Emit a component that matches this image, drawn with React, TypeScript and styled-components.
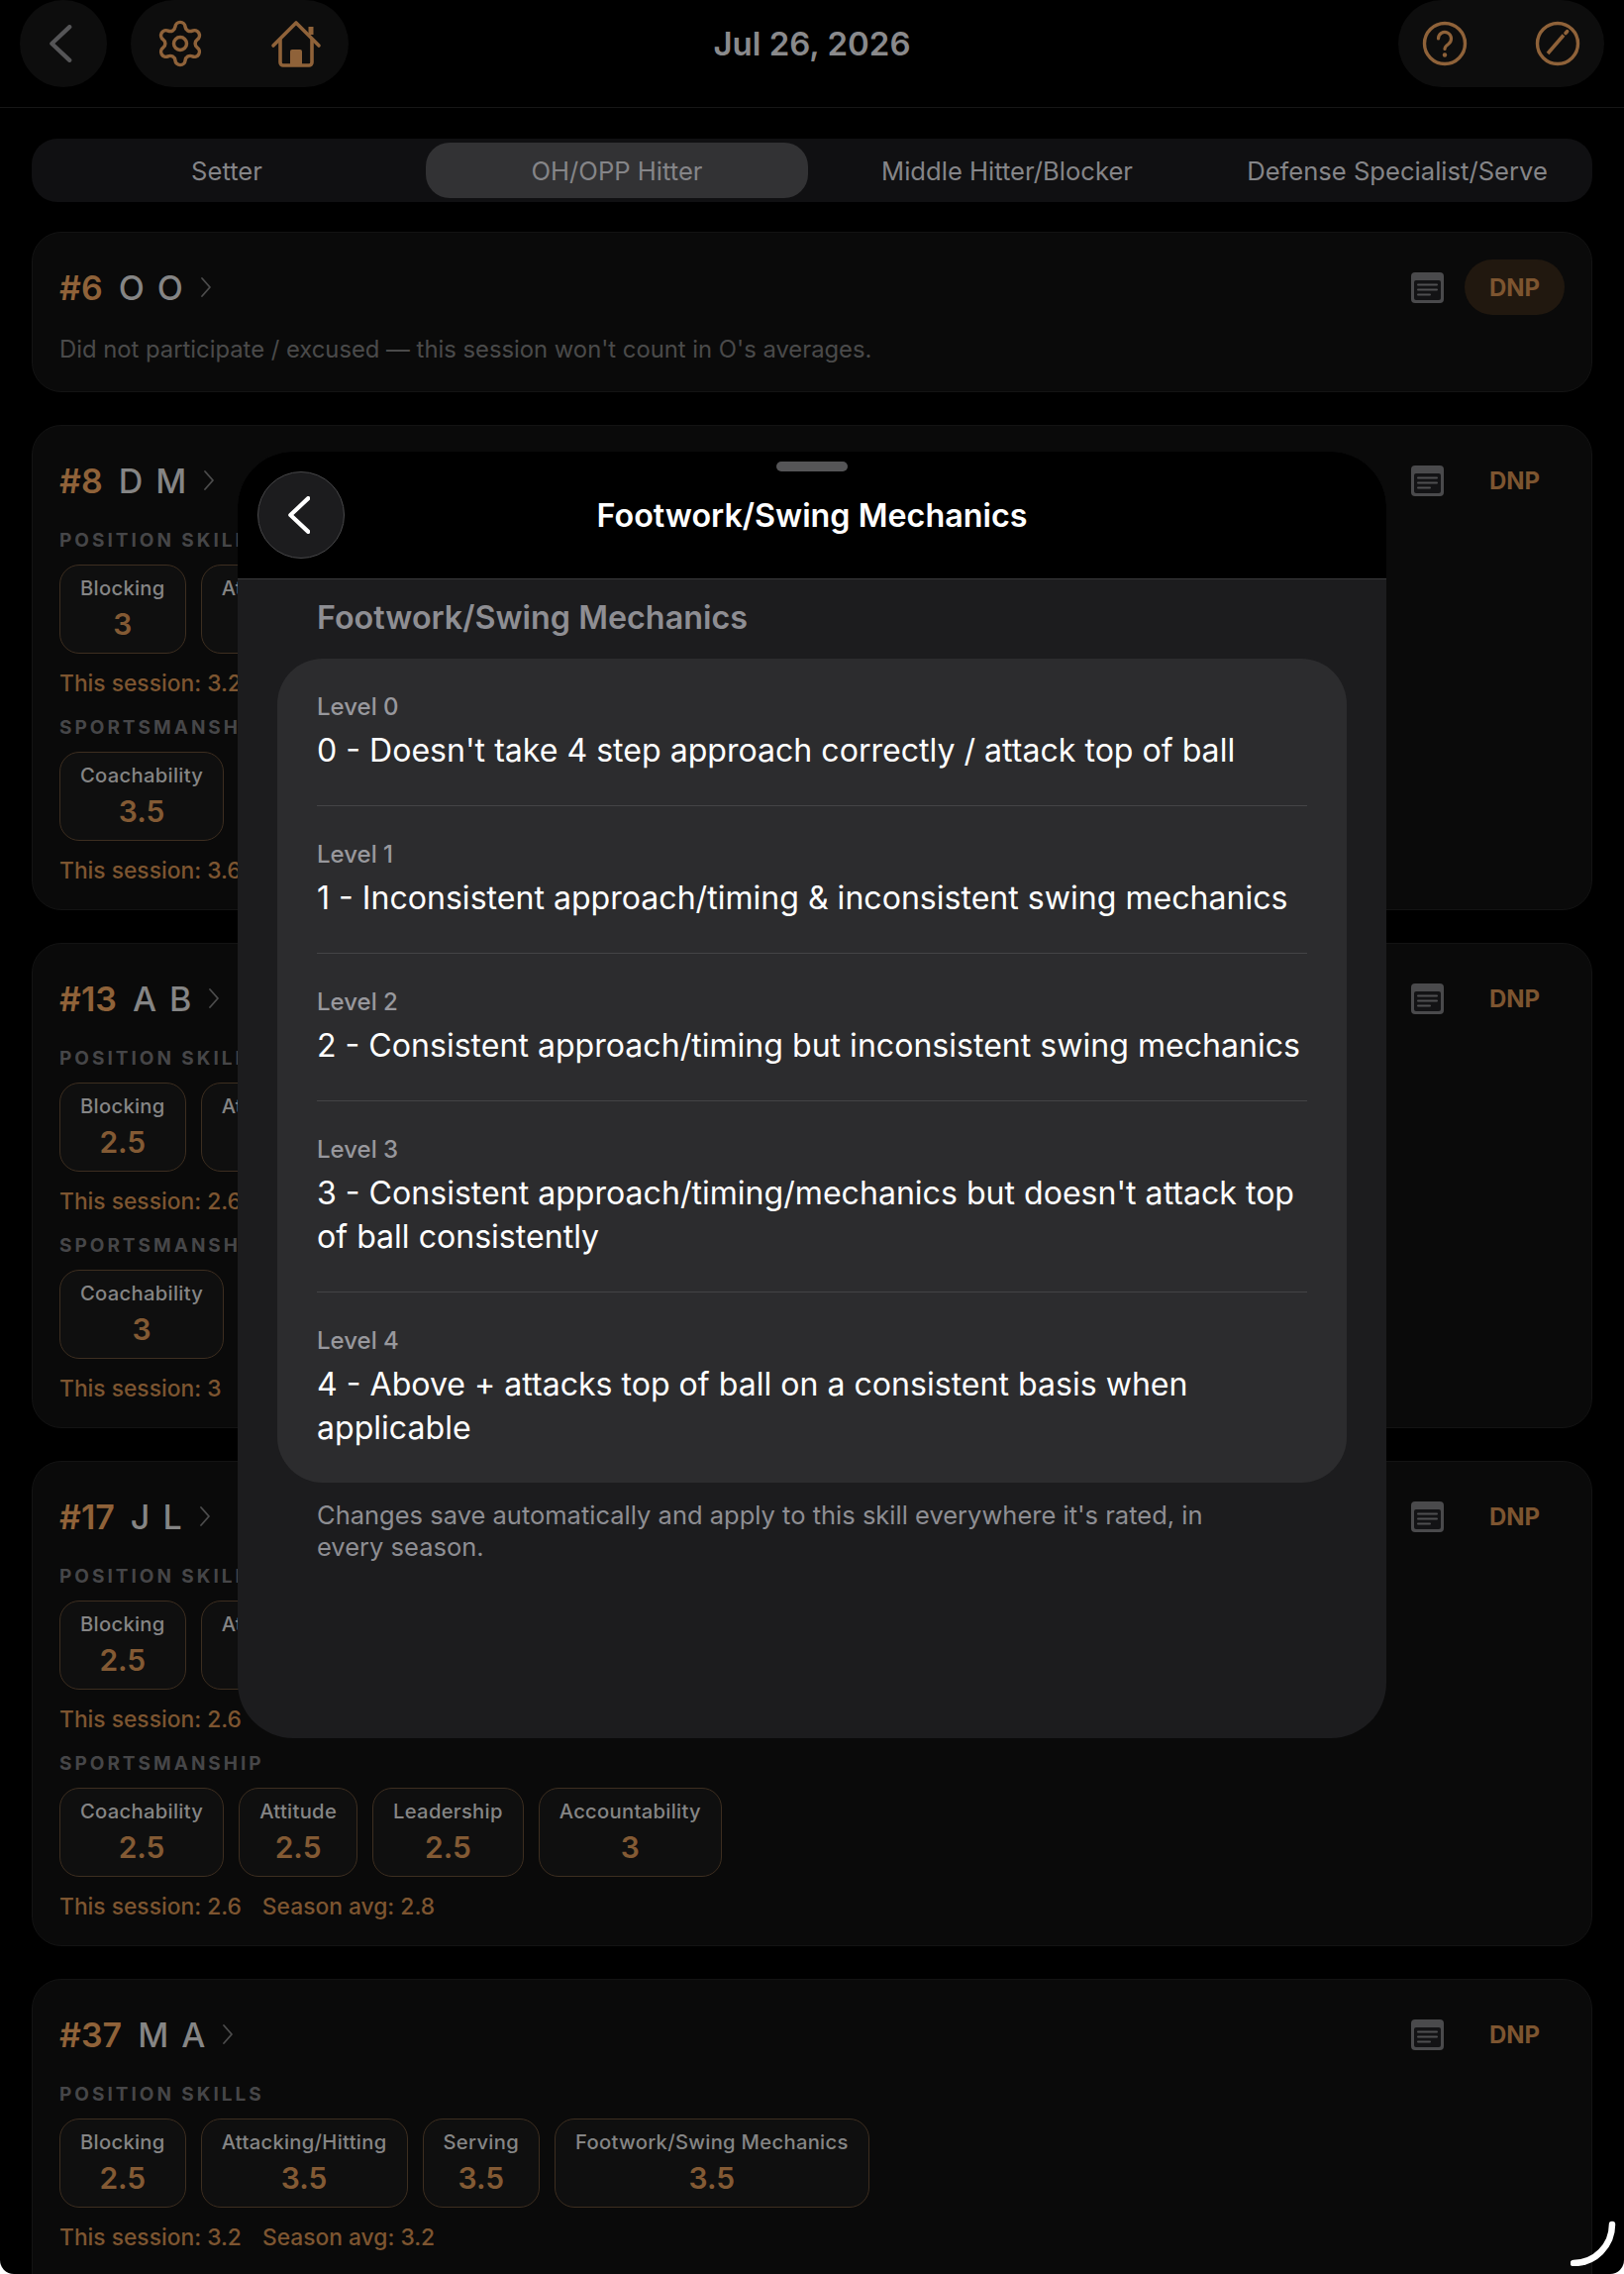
import styled, { createGlobalStyle } from 'styled-components';
import { Settings } from 'lucide-react';

const ORANGE = '#8f6239';

const GlobalStyle = createGlobalStyle`
  html, body {
    margin: 0;
    padding: 0;
    background: #fff;
  }
  * {
    box-sizing: border-box;
  }
`;

const Screen = styled.div`
  position: relative;
  width: 1640px;
  height: 2296px;
  overflow: hidden;
  background: #000;
  border-radius: 0 0 14px 14px;
  font-family: Inter, 'Liberation Sans', sans-serif;
`;

const TopBar = styled.header`
  display: grid;
  grid-template-columns: 1fr auto 1fr;
  align-items: start;
  height: 109px;
  padding: 0 20px;
  border-bottom: 1px solid #161616;
`;

const BarSide = styled.div<{ $end?: boolean }>`
  display: flex;
  gap: 24px;
  justify-content: ${({ $end }) => ($end ? 'flex-end' : 'flex-start')};
`;

const Pill = styled.div<{ $width: number }>`
  display: flex;
  align-items: center;
  justify-content: space-between;
  width: ${({ $width }) => $width}px;
  height: 88px;
  padding: 0 24px;
  border-radius: 44px;
  background: #0d0d0d;
  color: ${ORANGE};
`;

const BackPill = styled.div`
  display: flex;
  align-items: center;
  justify-content: center;
  width: 88px;
  height: 88px;
  padding-right: 6px;
  border-radius: 50%;
  background: #0d0d0d;
  color: #555557;
`;

const DateLabel = styled.div`
  height: 88px;
  line-height: 88px;
  font-size: 33px;
  font-weight: 600;
  color: #8a8a8c;
`;

const Content = styled.main`
  display: flex;
  flex-direction: column;
  gap: 30px;
  padding: 31px 32px 0;
`;

const Tabs = styled.nav`
  display: grid;
  grid-template-columns: repeat(4, 1fr);
  height: 64px;
  padding: 4px 0;
  border-radius: 26px;
  background: #101012;
`;

const Tab = styled.div<{ $active?: boolean }>`
  display: flex;
  align-items: center;
  justify-content: center;
  margin: 0 ${({ $active }) => ($active ? '4px' : '0')};
  border-radius: 24px;
  background: ${({ $active }) => ($active ? '#323234' : 'transparent')};
  font-size: 25.6px;
  font-weight: 400;
  white-space: nowrap;
  color: #858588;
`;

const CardList = styled.div`
  display: flex;
  flex-direction: column;
  gap: 33px;
`;

const Card = styled.section`
  padding: 27px;
  border: 1px solid #131313;
  border-radius: 30px;
  background: #0a0a0a;
`;

const CardHead = styled.div`
  display: flex;
  align-items: center;
  height: 56px;
`;

const Number = styled.span`
  font-size: 34px;
  font-weight: 600;
  color: ${ORANGE};
`;

const Name = styled.span`
  margin-left: 16px;
  font-size: 34px;
  font-weight: 500;
  letter-spacing: 2px;
  color: #858585;
`;

const HeadChevron = styled.svg`
  margin-left: 14px;
  width: 14px;
  height: 24px;
  color: #4c4c4c;
`;

const HeadActions = styled.div`
  display: flex;
  align-items: center;
  margin-left: auto;
  gap: 21px;
`;

const Dnp = styled.div<{ $active?: boolean }>`
  display: flex;
  align-items: center;
  justify-content: center;
  width: 101px;
  height: 56px;
  border-radius: 28px;
  background: ${({ $active }) => ($active ? '#21180f' : 'transparent')};
  font-size: 24px;
  font-weight: 700;
  color: #7d5530;
`;

const ExcusedNote = styled.p`
  margin: 20px 0 0;
  font-size: 23.8px;
  line-height: 30px;
  color: #4a4a4a;
`;

const GroupLabel = styled.div`
  margin-top: 21px;
  height: 24px;
  line-height: 24px;
  font-size: 19px;
  font-weight: 700;
  letter-spacing: 3px;
  text-transform: uppercase;
  color: #464648;
`;

const ChipRow = styled.div`
  display: flex;
  gap: 15px;
  margin-top: 12px;
`;

const Chip = styled.div`
  display: flex;
  flex-direction: column;
  align-items: center;
  height: 90px;
  padding: 10px 20px 0;
  border: 1px solid #3d2e20;
  border-radius: 20px;
  background: #0f0f0f;
`;

const ChipLabel = styled.span`
  font-size: 20.2px;
  line-height: 26px;
  font-weight: 500;
  letter-spacing: 0.3px;
  white-space: nowrap;
  color: #858585;
`;

const ChipValue = styled.span`
  margin-top: 4px;
  font-size: 30px;
  line-height: 38px;
  font-weight: 600;
  color: #835a34;
`;

const Session = styled.div`
  display: flex;
  gap: 21px;
  margin-top: 18px;
  height: 24px;
  line-height: 24px;
  font-size: 22.8px;
  font-weight: 500;
  color: #7d5530;
`;

const Modal = styled.div`
  position: absolute;
  top: 456px;
  left: 240px;
  display: flex;
  flex-direction: column;
  width: 1160px;
  height: 1299px;
  overflow: hidden;
  border-radius: 56px;
  background: #1c1c1e;
`;

const ModalHeader = styled.div`
  position: relative;
  display: flex;
  align-items: center;
  justify-content: center;
  height: 129px;
  flex: none;
  border-bottom: 1px solid #3a3a3c;
  background: #000;
`;

const Grabber = styled.div`
  position: absolute;
  top: 10px;
  left: 544px;
  width: 72px;
  height: 10px;
  border-radius: 5px;
  background: #555557;
`;

const ModalBack = styled.div`
  position: absolute;
  top: 20px;
  left: 20px;
  display: flex;
  align-items: center;
  justify-content: center;
  width: 88px;
  height: 88px;
  padding-right: 5px;
  border: 1.5px solid #48484a;
  border-radius: 50%;
  background: #1c1c1e;
  color: #fff;
`;

const ModalTitle = styled.h1`
  margin: 0;
  font-size: 32.3px;
  font-weight: 600;
  color: #fff;
`;

const ModalBody = styled.div`
  display: flex;
  flex-direction: column;
  padding: 19px 40px 0;
`;

const SectionTitle = styled.h2`
  margin: 0 0 21px;
  padding-left: 40px;
  font-size: 32.3px;
  line-height: 40px;
  font-weight: 600;
  color: #8e8e93;
`;

const LevelGroup = styled.div`
  padding: 0 40px;
  border-radius: 46px;
  background: #2c2c2e;
`;

const LevelRow = styled.div`
  padding: 34px 0 33px;
  border-bottom: 1px solid #444446;

  &:last-child {
    border-bottom: none;
  }
`;

const LevelLabel = styled.div`
  font-size: 24px;
  line-height: 30px;
  font-weight: 500;
  color: #98989d;
`;

const LevelText = styled.div`
  margin-top: 7px;
  font-size: 32.1px;
  line-height: 44px;
  color: #fff;
`;

const Footnote = styled.p`
  margin: 17px 0 0;
  padding-left: 40px;
  max-width: 960px;
  font-size: 25.5px;
  line-height: 32px;
  color: #8e8e93;
`;

const ResizeHandle = styled.svg`
  position: absolute;
  right: 8px;
  bottom: 8px;
  width: 46px;
  height: 46px;
  color: #fff;
`;

const HomeGlyph = styled.svg`
  margin-right: 3px;
`;

const Chevron = ({ size, stroke }: { size: number; stroke: number }) => (
  <svg width={size * 0.62} height={size} viewBox="0 0 22 36" fill="none" stroke="currentColor" strokeWidth={stroke} strokeLinecap="round" strokeLinejoin="round">
    <path d="M20 2 3 18l17 16" />
  </svg>
);

const HomeIcon = () => (
  <HomeGlyph width="52" height="48" viewBox="0 0 52 48" fill="none" stroke="currentColor" strokeWidth="3.6" strokeLinecap="round" strokeLinejoin="round">
    <path d="M3 26 26 3l23 23" />
    <path d="M10 20v23a3 3 0 0 0 3 3h26a3 3 0 0 0 3-3V20" />
    <path d="M41 15V7" strokeWidth="5" strokeLinecap="butt" />
    <path d="M20 46V32a2 2 0 0 1 2-2h8a2 2 0 0 1 2 2v14z" fill="currentColor" stroke="none" />
  </HomeGlyph>
);

const HelpIcon = () => (
  <svg width="46" height="46" viewBox="0 0 46 46" fill="none" stroke="currentColor" strokeWidth="3.4" strokeLinecap="round">
    <circle cx="23" cy="23" r="20.5" />
    <path d="M16.5 18a6.5 6.5 0 1 1 10.4 5.2c-2.4 1.7-3.9 3-3.9 5.3" strokeWidth="3.2" />
    <circle cx="23" cy="34.5" r="2.2" fill="currentColor" stroke="none" />
  </svg>
);

const PencilIcon = () => (
  <svg width="46" height="46" viewBox="0 0 46 46" fill="none" stroke="currentColor" strokeWidth="3.4" strokeLinecap="round">
    <circle cx="23" cy="23" r="20.5" />
    <path d="m13 33 16-18.5" strokeWidth="3.6" strokeLinecap="butt" />
    <path d="m31 12.5 1.6-1.8" strokeWidth="3.6" />
  </svg>
);

const NoteIcon = () => (
  <svg width="33" height="31" viewBox="0 0 33 31">
    <rect width="33" height="31" rx="4" fill="#4a4a4c" />
    <rect x="3" y="8" width="27" height="20" rx="2" fill="#131315" />
    <path d="M7 12.5h19M7 17.5h19M7 22.5h12" stroke="#4f4f51" strokeWidth="2" strokeLinecap="round" />
  </svg>
);

type Skill = [string, string];

type Player = {
  number: number;
  name: string;
  position: Skill[];
  positionSession: [string, string];
  sports: Skill[];
  sportsSession: [string, string];
};

const skills = (blocking: string, attacking: string, serving: string, footwork: string): Skill[] => [
  ['Blocking', blocking],
  ['Attacking/Hitting', attacking],
  ['Serving', serving],
  ['Footwork/Swing Mechanics', footwork],
];

const sportsmanship = (coach: string, attitude: string, leadership: string, account: string): Skill[] => [
  ['Coachability', coach],
  ['Attitude', attitude],
  ['Leadership', leadership],
  ['Accountability', account],
];

const players: Player[] = [
  {
    number: 8,
    name: 'D M',
    position: skills('3', '3.5', '3.5', '3'),
    positionSession: ['3.2', '3.2'],
    sports: sportsmanship('3.5', '3.5', '3.5', '3.5'),
    sportsSession: ['3.6', '3.5'],
  },
  {
    number: 13,
    name: 'A B',
    position: skills('2.5', '2.5', '3', '2.5'),
    positionSession: ['2.6', '2.8'],
    sports: sportsmanship('3', '3', '3', '3'),
    sportsSession: ['3', '3'],
  },
  {
    number: 17,
    name: 'J L',
    position: skills('2.5', '2.5', '3', '2.5'),
    positionSession: ['2.6', '2.8'],
    sports: sportsmanship('2.5', '2.5', '2.5', '3'),
    sportsSession: ['2.6', '2.8'],
  },
  {
    number: 37,
    name: 'M A',
    position: skills('2.5', '3.5', '3.5', '3.5'),
    positionSession: ['3.2', '3.2'],
    sports: sportsmanship('3', '3', '3', '3'),
    sportsSession: ['3', '3'],
  },
];

const levels = [
  ['Level 0', "0 - Doesn't take 4 step approach correctly / attack top of ball"],
  ['Level 1', '1 - Inconsistent approach/timing & inconsistent swing mechanics'],
  ['Level 2', '2 - Consistent approach/timing but inconsistent swing mechanics'],
  ['Level 3', "3 - Consistent approach/timing/mechanics but doesn't attack top of ball consistently"],
  ['Level 4', '4 - Above + attacks top of ball on a consistent basis when applicable'],
];

const Head = ({ number, name, active }: { number: number; name: string; active?: boolean }) => (
  <CardHead>
    <Number>#{number}</Number>
    <Name>{name}</Name>
    <HeadChevron viewBox="0 0 14 24" fill="none" stroke="currentColor" strokeWidth="1.8" strokeLinecap="round" strokeLinejoin="round">
      <path d="m3 3 8 9-8 9" />
    </HeadChevron>
    <HeadActions>
      <NoteIcon />
      <Dnp $active={active}>DNP</Dnp>
    </HeadActions>
  </CardHead>
);

const SkillGroup = ({ title, items, session }: { title: string; items: Skill[]; session: [string, string] }) => (
  <>
    <GroupLabel>{title}</GroupLabel>
    <ChipRow>
      {items.map(([label, value]) => (
        <Chip key={label}>
          <ChipLabel>{label}</ChipLabel>
          <ChipValue>{value}</ChipValue>
        </Chip>
      ))}
    </ChipRow>
    <Session>
      <span>This session: {session[0]}</span>
      <span>Season avg: {session[1]}</span>
    </Session>
  </>
);

export default function App() {
  return (
    <Screen>
      <GlobalStyle />
      <TopBar>
        <BarSide>
          <BackPill>
            <Chevron size={38} stroke={4} />
          </BackPill>
          <Pill $width={220}>
            <Settings size={52} strokeWidth={1.6} />
            <HomeIcon />
          </Pill>
        </BarSide>
        <DateLabel>Jul 26, 2026</DateLabel>
        <BarSide $end>
          <Pill $width={208}>
            <HelpIcon />
            <PencilIcon />
          </Pill>
        </BarSide>
      </TopBar>

      <Content>
        <Tabs>
          <Tab>Setter</Tab>
          <Tab $active>OH/OPP Hitter</Tab>
          <Tab>Middle Hitter/Blocker</Tab>
          <Tab>Defense Specialist/Serve</Tab>
        </Tabs>

        <CardList>
          <Card>
            <Head number={6} name="O O" active />
            <ExcusedNote>Did not participate / excused — this session won't count in O's averages.</ExcusedNote>
          </Card>
          {players.map((player) => (
            <Card key={player.number}>
              <Head number={player.number} name={player.name} />
              <SkillGroup title="Position Skills" items={player.position} session={player.positionSession} />
              <SkillGroup title="Sportsmanship" items={player.sports} session={player.sportsSession} />
            </Card>
          ))}
        </CardList>
      </Content>

      <Modal>
        <ModalHeader>
          <Grabber />
          <ModalBack>
            <Chevron size={38} stroke={4} />
          </ModalBack>
          <ModalTitle>Footwork/Swing Mechanics</ModalTitle>
        </ModalHeader>
        <ModalBody>
          <SectionTitle>Footwork/Swing Mechanics</SectionTitle>
          <LevelGroup>
            {levels.map(([label, text]) => (
              <LevelRow key={label}>
                <LevelLabel>{label}</LevelLabel>
                <LevelText>{text}</LevelText>
              </LevelRow>
            ))}
          </LevelGroup>
          <Footnote>Changes save automatically and apply to this skill everywhere it's rated, in every season.</Footnote>
        </ModalBody>
      </Modal>

      <ResizeHandle viewBox="0 0 46 46" fill="none" stroke="currentColor" strokeWidth="6.5" strokeLinecap="round">
        <path d="M42 4A39 39 0 0 1 3 43" />
      </ResizeHandle>
    </Screen>
  );
}
